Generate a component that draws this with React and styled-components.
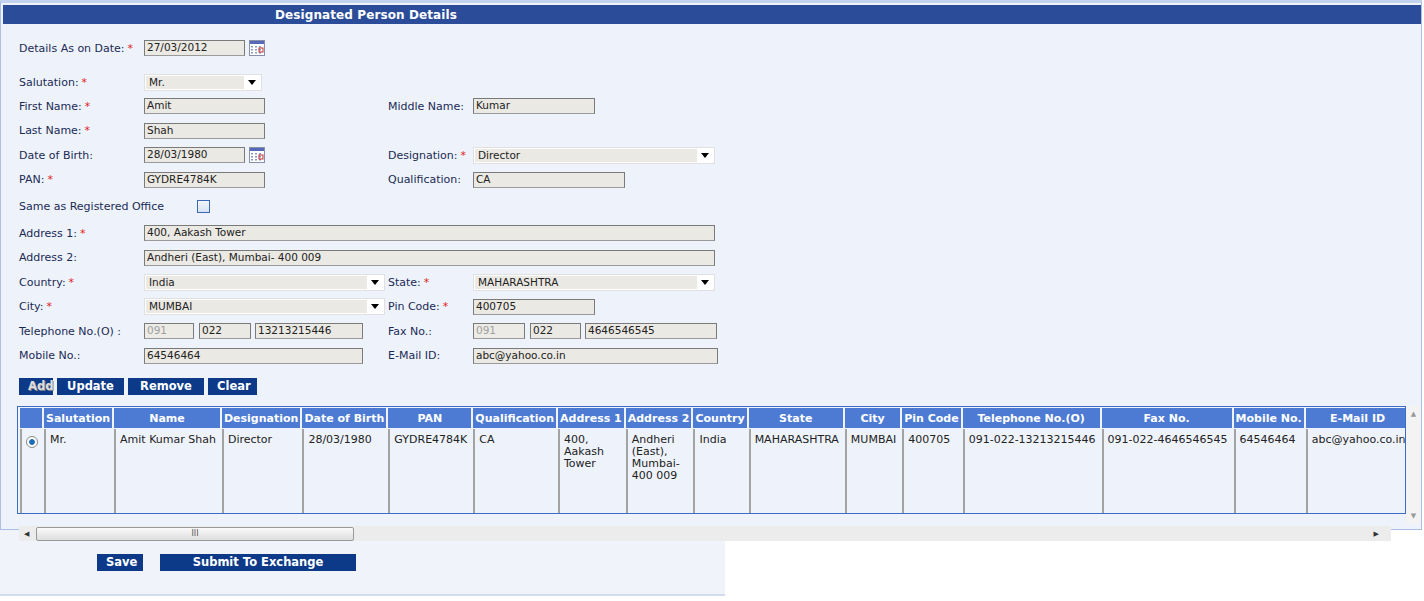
import React from "react";
import styled, { createGlobalStyle } from "styled-components";

const G = createGlobalStyle`
  body{margin:0;background:#fff;font-family:"DejaVu Sans",Verdana,sans-serif;font-size:11px;color:#1a2a55;}
`;
const Page = styled.div`width:1424px;height:601px;overflow:hidden;background:#fff;`;
const Panel = styled.div`
  margin:0 2px 0 0;border:1px solid #a9bfe4;border-top:3px solid #c3d3ee;background:#eef3fb;
  padding:2px 0 0 2px;height:530px;box-sizing:border-box;
`;
const Header = styled.div`
  height:19px;background:#2b4d99;color:#fff;font-weight:bold;font-size:12px;
  padding-left:272px;line-height:20px;letter-spacing:0.1px;
`;
const Form = styled.div`padding:12px 0 0 16px;display:flex;flex-direction:column;`;
const Row = styled.div`display:flex;align-items:center;height:${p=>p.h||24.5}px;margin-top:${p=>p.mt||0}px;`;
const Label = styled.div`width:${p=>p.w||125}px;color:#1a2a55;white-space:nowrap;`;
const Star = styled.span`color:#e02020;margin-left:3px;`;
const Input = styled.div`
  width:${p=>p.w}px;height:16px;box-sizing:border-box;border:1px solid #7a7a7a;border-bottom-color:#9a9a9a;
  background:${p=>p.dis?"#ecebe6":"#ebe9e3"};color:${p=>p.dis?"#a0a0a0":"#222"};font-size:10.5px;
  padding:0 2px;line-height:13px;margin-right:${p=>p.mr||0}px;white-space:nowrap;overflow:hidden;
`;
const Select = styled.div`
  width:${p=>p.w}px;height:17px;box-sizing:border-box;background:#fff;border:1px solid #e0e0e0;
  display:flex;align-items:center;padding:1px;font-size:10.5px;color:#222;
`;
const SelIn = styled.div`flex:1;height:13px;background:#ebe9e3;padding-left:3px;line-height:13px;`;
const Arrow = styled.div`width:16px;display:flex;justify-content:center;&:after{content:"";border:4px solid transparent;border-top:5px solid #000;border-bottom:0;}`;
const Col = styled.div`display:flex;align-items:center;width:${p=>p.w}px;`;
const Check = styled.div`width:11px;height:11px;border:1px solid #3a68b5;background:linear-gradient(#f3f6fb,#d6e2f2);margin-left:8px;`;
const Btns = styled.div`display:flex;gap:4px;padding:10px 0 0 16px;`;
const Btn = styled.div`
  height:17px;padding:0 ${p=>p.px||9}px;background:linear-gradient(#0d3a85 0,#0d3a85 40%,#000 50%,#0d3a85 60%,#0d3a85 100%);
  background:#0c3a88;color:#fff;font-weight:bold;font-size:11.5px;line-height:17px;text-align:center;
  width:${p=>p.w?p.w+"px":"auto"};box-sizing:border-box;text-shadow:${p=>p.sh?"1px 1px 0 #888":"none"};
  color:${p=>p.sh?"#ddd":"#fff"};
`;
const TableWrap = styled.div`margin:11px 0 0 14px;display:flex;width:1406px;`;
const TBox = styled.div`border:1px solid #3c6cc4;width:1387px;height:106px;overflow:hidden;background:#eef3fb;`;
const VScroll = styled.div`width:15px;height:118px;background:#f3f3f3;display:flex;flex-direction:column;justify-content:space-between;align-items:center;color:#999;font-size:7px;padding:4px 0;box-sizing:border-box;`;
const T = styled.table`border-collapse:separate;border-spacing:2px 1px;table-layout:fixed;margin-left:0;`;
const Th = styled.th`background:#4d7bd3;color:#fff;font-weight:bold;font-size:11px;height:20px;padding:0 2px;white-space:nowrap;`;
const Td = styled.td`vertical-align:top;height:81px;padding:5px 4px;border-left:2px solid #a3a3a3;color:#222;font-size:11px;line-height:12px;`;
const Radio = styled.div`width:10px;height:10px;border-radius:50%;border:1px solid #888;background:radial-gradient(#1a6bb8 35%,#fff 45%);margin:2px auto;`;
const HScroll = styled.div`margin:2px 0 0 16px;width:1372px;height:15px;background:#ececec;display:flex;align-items:center;position:relative;`;
const Thumb = styled.div`margin-left:17px;width:316px;height:12px;border:1px solid #999;border-radius:2px;background:linear-gradient(#fafafa,#ddd);text-align:center;font-size:8px;line-height:12px;color:#555;`;
const Bottom = styled.div`width:725px;height:66px;background:#f0f3f9;border-bottom:2px solid #d3dceb;display:flex;gap:17px;padding:24px 0 0 97px;box-sizing:border-box;`;
const Cal = () => (
  <svg width="16" height="16" viewBox="0 0 16 16" style={{marginLeft:4}}>
    <rect x="0.5" y="0.5" width="15" height="15" fill="#fff" stroke="#8a8fa8"/>
    <rect x="1" y="1" width="14" height="3" fill="#5668b8"/>
    {[4,8,12].map(x=>[7,10,13].map(y=><rect key={x+"-"+y} x={x-2} y={y-1} width="2" height="1.5" fill="#8899bb"/>))}
    <rect x="10" y="8" width="4" height="4" fill="none" stroke="#c03030"/>
  </svg>
);
const L = ({t,req,w}) => <Label w={w}>{t}{req&&<Star>*</Star>}</Label>;
const Sel = ({w,v}) => <Select w={w}><SelIn>{v}</SelIn><Arrow/></Select>;

const cols=[["",30],["Salutation",67],["Name",107],["Designation",77],["Date of Birth",82],["PAN",82],["Qualification",80],["Address 1",66],["Address 2",68],["Country",54],["State",92],["City",54],["Pin Code",58],["Telephone No.(O)",138],["Fax No.",131],["Mobile No.",68],["E-Mail ID",101]];
const vals=["","Mr.","Amit Kumar Shah","Director","28/03/1980","GYDRE4784K","CA","400,\nAakash\nTower","Andheri\n(East),\nMumbai-\n400 009","India","MAHARASHTRA","MUMBAI","400705","091-022-13213215446","091-022-4646546545","64546464","abc@yahoo.co.in"];

export default function App(){
  return <Page><G/>
    <Panel>
      <Header>Designated Person Details</Header>
      <Form>
        <Row h={24} ><L t="Details As on Date:" req/><Input w={101}>27/03/2012</Input><Cal/></Row>
        <Row mt={10} h={24}><L t="Salutation:" req/><Sel w={118} v="Mr."/></Row>
        <Row><Col w={369}><L t="First Name:" req/><Input w={121}>Amit</Input></Col><L t="Middle Name:" w={85}/><Input w={122}>Kumar</Input></Row>
        <Row><L t="Last Name:" req/><Input w={121}>Shah</Input></Row>
        <Row><Col w={369}><L t="Date of Birth:"/><Input w={101}>28/03/1980</Input><Cal/></Col><L t="Designation:" req w={85}/><Sel w={242} v="Director"/></Row>
        <Row><Col w={369}><L t="PAN:" req/><Input w={121}>GYDRE4784K</Input></Col><L t="Qualification:" w={85}/><Input w={152}>CA</Input></Row>
        <Row h={29}><Label w={170}>Same as Registered Office</Label><Check/></Row>
        <Row><L t="Address 1:" req/><Input w={571}>400, Aakash Tower</Input></Row>
        <Row><L t="Address 2:"/><Input w={571}>Andheri (East), Mumbai- 400 009</Input></Row>
        <Row><Col w={369}><L t="Country:" req/><Sel w={241} v="India"/></Col><L t="State:" req w={85}/><Sel w={242} v="MAHARASHTRA"/></Row>
        <Row><Col w={369}><L t="City:" req/><Sel w={241} v="MUMBAI"/></Col><L t="Pin Code:" req w={85}/><Input w={122}>400705</Input></Row>
        <Row><Col w={369}><L t="Telephone No.(O) :"/><Input w={50} mr={5} dis>091</Input><Input w={52} mr={4}>022</Input><Input w={108}>13213215446</Input></Col><L t="Fax No.:" w={85}/><Input w={52} mr={5} dis>091</Input><Input w={51} mr={4}>022</Input><Input w={132}>4646546545</Input></Row>
        <Row><Col w={369}><L t="Mobile No.:"/><Input w={219}>64546464</Input></Col><L t="E-Mail ID:" w={85}/><Input w={245}>abc@yahoo.co.in</Input></Row>
      </Form>
      <Btns><Btn w={34} px={0} sh>Add</Btn><Btn w={67}>Update</Btn><Btn w={76}>Remove</Btn><Btn w={49}>Clear</Btn></Btns>
      <TableWrap>
        <TBox><T>
          <colgroup>{cols.map((c,i)=><col key={i} style={{width:c[1]}}/>)}</colgroup>
          <thead><tr>{cols.map((c,i)=><Th key={i}>{c[0]}</Th>)}</tr></thead>
          <tbody><tr>{vals.map((v,i)=><Td key={i} style={{whiteSpace:"pre"}}>{i===0?<Radio/>:v}</Td>)}</tr></tbody>
        </T></TBox>
        <VScroll><span>▲</span><span>▼</span></VScroll>
      </TableWrap>
      <HScroll><span style={{position:"absolute",left:5,fontSize:7,color:"#333"}}>◀</span><Thumb>III</Thumb><span style={{position:"absolute",right:12,fontSize:7,color:"#333"}}>▶</span></HScroll>
    </Panel>
    <Bottom><Btn w={46}>Save</Btn><Btn w={196}>Submit To Exchange</Btn></Bottom>
  </Page>;
}
